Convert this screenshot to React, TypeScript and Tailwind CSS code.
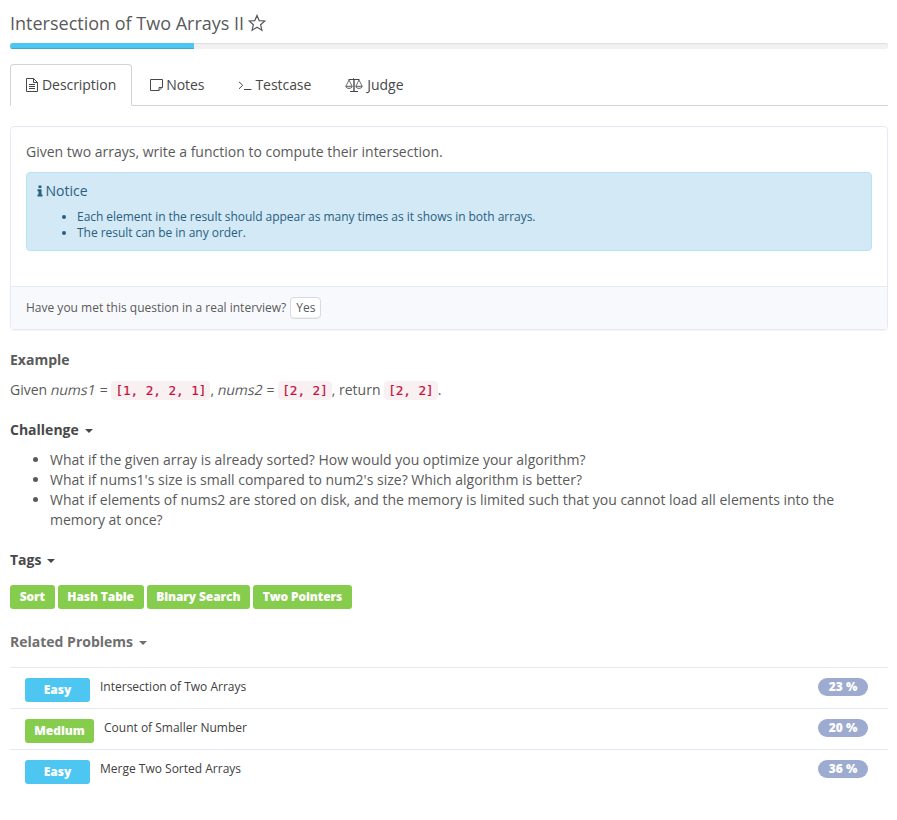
import type { ReactNode } from 'react';

const line = {
  fill: 'none',
  stroke: 'currentColor',
  strokeWidth: 1,
} as const;

function StarIcon() {
  return (
    <svg className="ml-1 h-[18px] w-[18px]" viewBox="0 0 18 18" {...line} strokeWidth={1.2}>
      <path d="M9 1.4 11.2 6.6 16.8 7 12.6 10.7 13.9 16.2 9 13.3 4.1 16.2 5.4 10.7 1.2 7 6.8 6.6Z" />
    </svg>
  );
}

function DocumentIcon() {
  return (
    <svg className="mr-1 h-[14px] w-3" viewBox="0 0 12 14" {...line}>
      <path d="M.5.5H7.5L11.5 4.5V13.5H.5Z M7.5.5V4.5H11.5 M3 6.5H9 M3 8.5H9 M3 10.5H9" />
    </svg>
  );
}

function NoteIcon() {
  return (
    <svg className="mr-[3px] h-3 w-[13px]" viewBox="0 0 13 12" {...line}>
      <path d="M.5.5H12.5V8L9 11.5H.5Z M12.5 8.5H9V11.5" />
    </svg>
  );
}

function TerminalIcon() {
  return (
    <svg className="mr-[3px] h-[14px] w-[14px]" viewBox="0 0 14 14" {...line}>
      <path d="M1 3.8 4.7 7.3 1 10.8" />
      <path d="M6 11.5H13.5" />
    </svg>
  );
}

function ScalesIcon() {
  return (
    <svg className="mb-px mr-1 h-[14px] w-[18px]" viewBox="0 0 18 14" {...line}>
      <path d="M8.5 0V13 M9.5 2V13" strokeWidth=".7" />
      <path d="M5 13.5H13 M3.5 1.5H14.5" />
      <path d="M4 2 1 8 M4 2 7 8 M14 2 11 8 M14 2 17 8" strokeWidth=".8" />
      <path d="M.7 8.3H7.3C7 11 1 11 .7 8.3Z M10.7 8.3H17.3C17 11 11 11 10.7 8.3Z" strokeWidth=".9" />
    </svg>
  );
}

function InfoIcon() {
  return (
    <svg className="mr-[3px] h-3 w-[6px]" viewBox="0 0 6 12" fill="currentColor">
      <path d="M1.5.5H4.5V3H1.5Z M.5 4.3H4.5V9.5H5.5V11.5H.5V9.5H1.5V6.3H.5Z" />
    </svg>
  );
}

function Caret() {
  return <span className="ml-1.5 mt-px border-x-4 border-t-4 border-x-transparent border-t-current" />;
}

function Tab({ icon, label, active }: { icon: ReactNode; label: string; active?: boolean }) {
  return (
    <a
      className={`mr-0.5 flex h-[42px] items-center rounded-t border px-[15px] tracking-[-0.05px] text-[#484848] ${
        active ? '-mb-px border-[#d3d3d3] border-b-white bg-white' : 'border-transparent'
      }`}
    >
      {icon}
      {label}
    </a>
  );
}

function Code({ children }: { children: ReactNode }) {
  return (
    <code className="inline-block h-[19px] rounded bg-[#f9f0f2] px-1 font-['DejaVu_Sans_Mono',monospace] text-[12.6px] leading-[19px] text-[#c20f3c] [-webkit-text-stroke:0.2px_#c20f3c]">
      {children}
    </code>
  );
}

function Variable({ children }: { children: ReactNode }) {
  return <em className="ml-[0.5px] inline-block -skew-x-12 not-italic">{children}</em>;
}

const tags = ['Sort', 'Hash Table', 'Binary Search', 'Two Pointers'];

const related = [
  { level: 'Easy', title: 'Intersection of Two Arrays', rate: '23 %' },
  { level: 'Medium', title: 'Count of Smaller Number', rate: '20 %' },
  { level: 'Easy', title: 'Merge Two Sorted Arrays', rate: '36 %' },
];

export default function App() {
  return (
    <main className="h-[820px] bg-white pl-[10px] pr-[9px] pt-[13px] font-['Open_Sans',sans-serif] text-sm leading-5 text-[#5a5a5a]">
      <h1 className="flex h-5 items-center whitespace-nowrap text-lg">
        Intersection of Two Arrays II
        <StarIcon />
      </h1>

      <div className="mt-[10px] h-[6px] overflow-hidden rounded-[3px] bg-[#f1f1f1] shadow-[inset_0_1px_1px_#dedede]">
        <div className="h-full w-[184px] bg-[#4dc7f2] shadow-[inset_0_-1px_0_#42a8cc]" />
      </div>

      <nav className="mt-[15px] flex h-[42px] border-b border-[#d3d3d3]">
        <Tab icon={<DocumentIcon />} label="Description" active />
        <Tab icon={<NoteIcon />} label="Notes" />
        <Tab icon={<TerminalIcon />} label="Testcase" />
        <Tab icon={<ScalesIcon />} label="Judge" />
      </nav>

      <section className="mt-5 h-[204px] rounded-sm border border-[#e6e9f5] shadow-[0_1px_1px_rgba(0,0,0,0.05)]">
        <div className="h-[159px] px-[15px] pt-[15px]">
          <p>Given two arrays, write a function to compute their intersection.</p>
          <div className="mt-[10px] h-[79px] rounded border border-[#b4e5f0] bg-[#d3e9f6] px-[10px] pt-2 text-[#29607f]">
            <div className="-ml-[0.5px] flex items-center">
              <InfoIcon />
              Notice
            </div>
            <ul className="mt-2 list-disc pl-10 text-xs leading-4 tracking-[-0.04px]">
              <li>Each element in the result should appear as many times as it shows in both arrays.</li>
              <li>The result can be in any order.</li>
            </ul>
          </div>
        </div>
        <div className="flex h-[43px] items-center border-t border-[#e3eaf5] bg-[#f8f9fd] px-[15px] text-xs">
          Have you met this question in a real interview?
          <button className="ml-1 h-[22px] w-[31px] rounded-sm border border-[#d6dae3] bg-white text-xs shadow-[inset_0_-1px_1px_#f0f0f0]">
            Yes
          </button>
        </div>
      </section>

      <h2 className="mt-5 font-bold">Example</h2>
      <p className="mt-[10px] h-5 whitespace-nowrap">
        Given <Variable>nums1</Variable> = <Code>[1, 2, 2, 1]</Code>, <Variable>nums2</Variable> ={' '}
        <Code>[2, 2]</Code>, return <Code>[2, 2]</Code>.
      </p>

      <h2 className="mt-5 flex items-center font-bold text-[#484848]">
        Challenge
        <Caret />
      </h2>
      <ul className="mt-[10px] list-disc pl-10">
        <li>What if the given array is already sorted? How would you optimize your algorithm?</li>
        <li>What if nums1's size is small compared to num2's size? Which algorithm is better?</li>
        <li>
          What if elements of nums2 are stored on disk, and the memory is limited such that you cannot load all elements
          into the memory at once?
        </li>
      </ul>

      <h2 className="mt-5 flex items-center font-bold text-[#484848]">
        Tags
        <Caret />
      </h2>
      <div className="mt-[15px] flex gap-[3px] text-xs font-extrabold text-white">
        {tags.map((tag) => (
          <span key={tag} className="flex h-6 items-center rounded-[3px] bg-[#86cc4d] px-[9.7px] tracking-[-0.11px]">
            {tag}
          </span>
        ))}
      </div>

      <h2 className="mt-[23px] flex items-center font-bold text-[#6f6f6f]">
        Related Problems
        <Caret />
      </h2>
      <div className="mt-[15px]">
        {related.map((item) => (
          <div key={item.title} className="flex h-[41px] border-t border-[#e6e9f3] pl-[15px] pr-5 pt-[10px] text-xs">
            <span
              className={`flex h-6 items-center justify-center rounded-[3px] font-extrabold text-white ${
                item.level === 'Easy' ? 'w-[65px] bg-[#4dc7f2]' : 'w-[69px] bg-[#86cc4d]'
              }`}
            >
              {item.level}
            </span>
            <span className="ml-[10px] mt-px text-[#404040]">{item.title}</span>
            <span className="ml-auto flex h-[18px] w-[50px] items-center justify-center rounded-full bg-[#9eabd0] font-extrabold text-white">
              {item.rate}
            </span>
          </div>
        ))}
      </div>
    </main>
  );
}
